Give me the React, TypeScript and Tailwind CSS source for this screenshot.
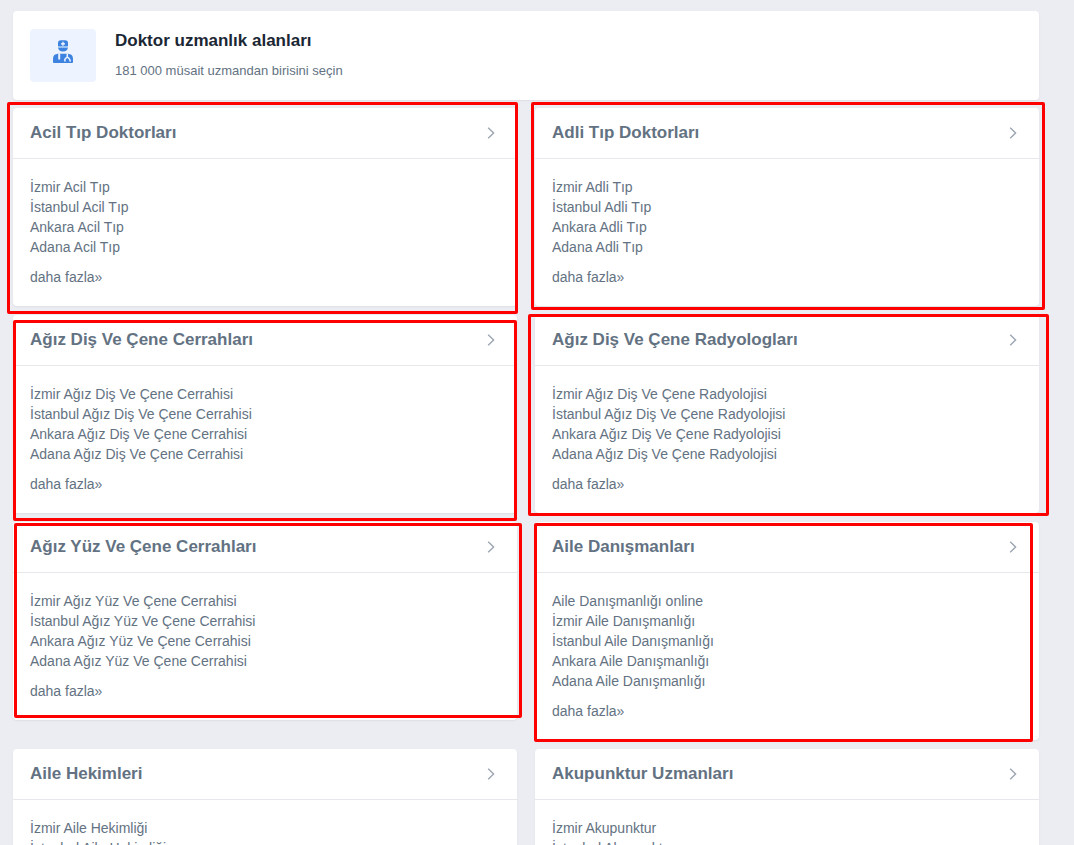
import React from "react";

type Specialty = {
  title: string;
  links: string[];
  outline?: string;
};

const specialties: Specialty[] = [
  {
    title: "Acil Tıp Doktorları",
    links: ["İzmir Acil Tıp", "İstanbul Acil Tıp", "Ankara Acil Tıp", "Adana Acil Tıp"],
    outline: "-left-[6px] -right-[1px] -top-[6px] -bottom-[8px]",
  },
  {
    title: "Adli Tıp Doktorları",
    links: ["İzmir Adli Tıp", "İstanbul Adli Tıp", "Ankara Adli Tıp", "Adana Adli Tıp"],
    outline: "-left-[4px] -right-[6px] -top-[6px] -bottom-[4px]",
  },
  {
    title: "Ağız Diş Ve Çene Cerrahları",
    links: [
      "İzmir Ağız Diş Ve Çene Cerrahisi",
      "İstanbul Ağız Diş Ve Çene Cerrahisi",
      "Ankara Ağız Diş Ve Çene Cerrahisi",
      "Adana Ağız Diş Ve Çene Cerrahisi",
    ],
    outline: "left-0 right-0 top-[5px] -bottom-[8px]",
  },
  {
    title: "Ağız Diş Ve Çene Radyologları",
    links: [
      "İzmir Ağız Diş Ve Çene Radyolojisi",
      "İstanbul Ağız Diş Ve Çene Radyolojisi",
      "Ankara Ağız Diş Ve Çene Radyolojisi",
      "Adana Ağız Diş Ve Çene Radyolojisi",
    ],
    outline: "-left-[7px] -right-[10px] -top-[1px] -bottom-[3px]",
  },
  {
    title: "Ağız Yüz Ve Çene Cerrahları",
    links: [
      "İzmir Ağız Yüz Ve Çene Cerrahisi",
      "İstanbul Ağız Yüz Ve Çene Cerrahisi",
      "Ankara Ağız Yüz Ve Çene Cerrahisi",
      "Adana Ağız Yüz Ve Çene Cerrahisi",
    ],
    outline: "left-[1px] -right-[5px] top-[1px] bottom-[2px]",
  },
  {
    title: "Aile Danışmanları",
    links: [
      "Aile Danışmanlığı online",
      "İzmir Aile Danışmanlığı",
      "İstanbul Aile Danışmanlığı",
      "Ankara Aile Danışmanlığı",
      "Adana Aile Danışmanlığı",
    ],
    outline: "-left-[1px] right-[6px] top-[1px] -bottom-[2px]",
  },
  {
    title: "Aile Hekimleri",
    links: ["İzmir Aile Hekimliği", "İstanbul Aile Hekimliği", "Ankara Aile Hekimliği", "Adana Aile Hekimliği"],
  },
  {
    title: "Akupunktur Uzmanları",
    links: ["İzmir Akupunktur", "İstanbul Akupunktur", "Ankara Akupunktur", "Adana Akupunktur"],
  },
];

function DoctorIcon() {
  return (
    <svg width="20" height="24" viewBox="0 0 20 24" fill="#3d83df" aria-hidden="true">
      <path d="M5 6.6V3Q5 0.3 7.8 0.3h4.4Q15 0.3 15 3v3.6Z" />
      <path d="M9.4 1.8h1.2V3.2H12v1.2h-1.4V5.8H9.4V4.4H8V3.2h1.4Z" fill="#fff" />
      <path d="M5 6.6h10v1.2H5Z" fill="#a9cbf6" />
      <path d="M5.2 7.8h9.6Q14.4 11.6 10 11.6T5.2 7.8Z" />
      <path d="M0 22V18.6Q0.2 14 5 13.8h10q4.8 0.2 5 4.8V22q0 1-1 1H1q-1 0-1-1Z" />
      <path d="M5.2 13.6h2v5q0 1.2-1 1.2t-1-1.2Z" fill="#edf4ff" />
      <path d="M14.3 13.6v3.2M11.9 21.6V19.4q2.4-4.4 4.8 0l0.6 2.2" stroke="#edf4ff" strokeWidth="1.5" fill="none" />
    </svg>
  );
}

function SpecialtyCard({ title, links, outline }: Specialty) {
  return (
    <section className="relative rounded bg-white shadow-[0_1px_2px_rgba(40,50,70,0.08)]">
      <h2 className="border-b border-[#e7e8eb] text-[17px] leading-6 font-bold">
        <a href="#" className="flex items-center justify-between py-[13px] pr-5 pl-[17px]">
          {title}
          <svg
            className="shrink-0"
            width="12"
            height="12"
            viewBox="0 0 12 12"
            fill="none"
            stroke="#9ca5b1"
            strokeWidth="1.4"
            aria-hidden="true"
          >
            <path d="M3.2 0.7 8.6 6 3.2 11.3" />
          </svg>
        </a>
      </h2>
      <div className="px-[17px] pt-[18px] pb-[19px]">
        <ul>
          {links.map((link) => (
            <li key={link}>
              <a href="#">{link}</a>
            </li>
          ))}
        </ul>
        <a href="#" className="mt-[10px] block">
          daha fazla»
        </a>
      </div>
      {outline && (
        <div className={`pointer-events-none absolute z-10 rounded-[2px] border-[3px] border-[#ff0000] ${outline}`} />
      )}
    </section>
  );
}

export default function App() {
  return (
    <main className="h-screen overflow-hidden bg-[#ecedf2] pt-[11px] pr-[35px] pl-[13px] font-['Liberation_Sans',Arial,sans-serif] text-sm leading-5 text-[#637282]">
      <header className="flex items-start rounded bg-white px-[17px] py-[18px] shadow-[0_1px_2px_rgba(40,50,70,0.08)]">
        <div className="flex h-[53px] w-[66px] shrink-0 justify-center rounded bg-[#edf4ff] pt-[11px]">
          <DoctorIcon />
        </div>
        <div className="ml-[19px]">
          <h1 className="text-[17px] leading-6 font-bold text-[#1b2734]">Doktor uzmanlık alanları</h1>
          <p className="mt-2 text-[13px]">181 000 müsait uzmandan birisini seçin</p>
        </div>
      </header>
      <div className="mt-2 grid grid-cols-2 items-start gap-x-[18px] gap-y-[9px]">
        {specialties.map((specialty) => (
          <SpecialtyCard key={specialty.title} {...specialty} />
        ))}
      </div>
    </main>
  );
}
